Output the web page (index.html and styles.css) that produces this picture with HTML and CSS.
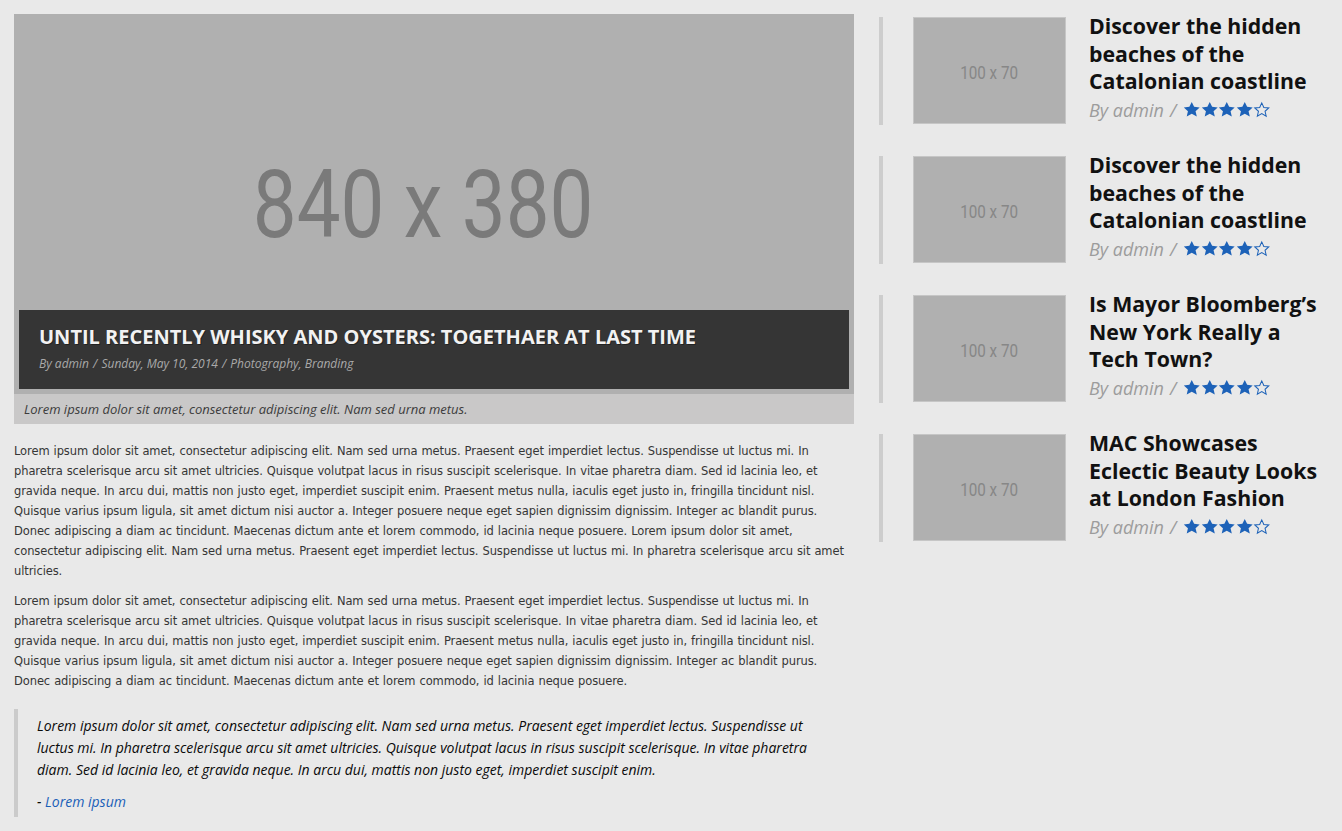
FILE: index.html
```html
<!DOCTYPE html>
<html lang="en">
<head>
<meta charset="utf-8">
<title>Post</title>
<link rel="stylesheet" href="styles.css">
</head>
<body>
<div class="page">
  <main class="main">
    <figure class="hero">
      <div class="hero-img">
        <span class="ph-text">840 x 380</span>
        <div class="hero-title">
          <h1>UNTIL RECENTLY WHISKY AND OYSTERS: TOGETHAER AT LAST TIME</h1>
          <div class="hero-meta">By admin <span class="sep">/</span> Sunday, May 10, 2014 <span class="sep">/</span> Photography, Branding</div>
        </div>
      </div>
      <figcaption class="caption">Lorem ipsum dolor sit amet, consectetur adipiscing elit. Nam sed urna metus.</figcaption>
    </figure>
    <p class="body-text">Lorem ipsum dolor sit amet, consectetur adipiscing elit. Nam sed urna metus. Praesent eget imperdiet lectus. Suspendisse ut luctus mi. In pharetra scelerisque arcu sit amet ultricies. Quisque volutpat lacus in risus suscipit scelerisque. In vitae pharetra diam. Sed id lacinia leo, et gravida neque. In arcu dui, mattis non justo eget, imperdiet suscipit enim. Praesent metus nulla, iaculis eget justo in, fringilla tincidunt nisl. Quisque varius ipsum ligula, sit amet dictum nisi auctor a. Integer posuere neque eget sapien dignissim dignissim. Integer ac blandit purus. Donec adipiscing a diam ac tincidunt. Maecenas dictum ante et lorem commodo, id lacinia neque posuere. Lorem ipsum dolor sit amet, consectetur adipiscing elit. Nam sed urna metus. Praesent eget imperdiet lectus. Suspendisse ut luctus mi. In pharetra scelerisque arcu sit amet ultricies.</p>
    <p class="body-text">Lorem ipsum dolor sit amet, consectetur adipiscing elit. Nam sed urna metus. Praesent eget imperdiet lectus. Suspendisse ut luctus mi. In pharetra scelerisque arcu sit amet ultricies. Quisque volutpat lacus in risus suscipit scelerisque. In vitae pharetra diam. Sed id lacinia leo, et gravida neque. In arcu dui, mattis non justo eget, imperdiet suscipit enim. Praesent metus nulla, iaculis eget justo in, fringilla tincidunt nisl. Quisque varius ipsum ligula, sit amet dictum nisi auctor a. Integer posuere neque eget sapien dignissim dignissim. Integer ac blandit purus. Donec adipiscing a diam ac tincidunt. Maecenas dictum ante et lorem commodo, id lacinia neque posuere.</p>
    <blockquote class="quote">
      <p>Lorem ipsum dolor sit amet, consectetur adipiscing elit. Nam sed urna metus. Praesent eget imperdiet lectus. Suspendisse ut luctus mi. In pharetra scelerisque arcu sit amet ultricies. Quisque volutpat lacus in risus suscipit scelerisque. In vitae pharetra diam. Sed id lacinia leo, et gravida neque. In arcu dui, mattis non justo eget, imperdiet suscipit enim.</p>
      <cite>- <a href="#">Lorem ipsum</a></cite>
    </blockquote>
  </main>

  <aside class="sidebar">
    <article class="item">
      <div class="thumb"><span>100 x 70</span></div>
      <div class="info">
        <h2>Discover the hidden beaches of the Catalonian coastline</h2>
        <div class="meta">By admin <span class="sep">/</span> <span class="stars"><svg viewBox="0 0 17 16"><path class="f" d="M8.5 0.6l2.3 4.8 5.4 0.6-4 3.6 1.2 5.3-4.9-2.8-4.9 2.8 1.2-5.3-4-3.6 5.4-0.6z"/></svg><svg viewBox="0 0 17 16"><path class="f" d="M8.5 0.6l2.3 4.8 5.4 0.6-4 3.6 1.2 5.3-4.9-2.8-4.9 2.8 1.2-5.3-4-3.6 5.4-0.6z"/></svg><svg viewBox="0 0 17 16"><path class="f" d="M8.5 0.6l2.3 4.8 5.4 0.6-4 3.6 1.2 5.3-4.9-2.8-4.9 2.8 1.2-5.3-4-3.6 5.4-0.6z"/></svg><svg viewBox="0 0 17 16"><path class="f" d="M8.5 0.6l2.3 4.8 5.4 0.6-4 3.6 1.2 5.3-4.9-2.8-4.9 2.8 1.2-5.3-4-3.6 5.4-0.6z"/></svg><svg viewBox="0 0 17 16"><path class="o" d="M8.5 1.6l2 4.4 4.8 0.5-3.6 3.2 1.1 4.7-4.3-2.5-4.3 2.5 1.1-4.7-3.6-3.2 4.8-0.5z"/></svg></span></div>
      </div>
    </article>
    <article class="item">
      <div class="thumb"><span>100 x 70</span></div>
      <div class="info">
        <h2>Discover the hidden beaches of the Catalonian coastline</h2>
        <div class="meta">By admin <span class="sep">/</span> <span class="stars"><svg viewBox="0 0 17 16"><path class="f" d="M8.5 0.6l2.3 4.8 5.4 0.6-4 3.6 1.2 5.3-4.9-2.8-4.9 2.8 1.2-5.3-4-3.6 5.4-0.6z"/></svg><svg viewBox="0 0 17 16"><path class="f" d="M8.5 0.6l2.3 4.8 5.4 0.6-4 3.6 1.2 5.3-4.9-2.8-4.9 2.8 1.2-5.3-4-3.6 5.4-0.6z"/></svg><svg viewBox="0 0 17 16"><path class="f" d="M8.5 0.6l2.3 4.8 5.4 0.6-4 3.6 1.2 5.3-4.9-2.8-4.9 2.8 1.2-5.3-4-3.6 5.4-0.6z"/></svg><svg viewBox="0 0 17 16"><path class="f" d="M8.5 0.6l2.3 4.8 5.4 0.6-4 3.6 1.2 5.3-4.9-2.8-4.9 2.8 1.2-5.3-4-3.6 5.4-0.6z"/></svg><svg viewBox="0 0 17 16"><path class="o" d="M8.5 1.6l2 4.4 4.8 0.5-3.6 3.2 1.1 4.7-4.3-2.5-4.3 2.5 1.1-4.7-3.6-3.2 4.8-0.5z"/></svg></span></div>
      </div>
    </article>
    <article class="item">
      <div class="thumb"><span>100 x 70</span></div>
      <div class="info">
        <h2>Is Mayor Bloomberg’s New York Really a Tech Town?</h2>
        <div class="meta">By admin <span class="sep">/</span> <span class="stars"><svg viewBox="0 0 17 16"><path class="f" d="M8.5 0.6l2.3 4.8 5.4 0.6-4 3.6 1.2 5.3-4.9-2.8-4.9 2.8 1.2-5.3-4-3.6 5.4-0.6z"/></svg><svg viewBox="0 0 17 16"><path class="f" d="M8.5 0.6l2.3 4.8 5.4 0.6-4 3.6 1.2 5.3-4.9-2.8-4.9 2.8 1.2-5.3-4-3.6 5.4-0.6z"/></svg><svg viewBox="0 0 17 16"><path class="f" d="M8.5 0.6l2.3 4.8 5.4 0.6-4 3.6 1.2 5.3-4.9-2.8-4.9 2.8 1.2-5.3-4-3.6 5.4-0.6z"/></svg><svg viewBox="0 0 17 16"><path class="f" d="M8.5 0.6l2.3 4.8 5.4 0.6-4 3.6 1.2 5.3-4.9-2.8-4.9 2.8 1.2-5.3-4-3.6 5.4-0.6z"/></svg><svg viewBox="0 0 17 16"><path class="o" d="M8.5 1.6l2 4.4 4.8 0.5-3.6 3.2 1.1 4.7-4.3-2.5-4.3 2.5 1.1-4.7-3.6-3.2 4.8-0.5z"/></svg></span></div>
      </div>
    </article>
    <article class="item">
      <div class="thumb"><span>100 x 70</span></div>
      <div class="info">
        <h2>MAC Showcases Eclectic Beauty Looks at London Fashion</h2>
        <div class="meta">By admin <span class="sep">/</span> <span class="stars"><svg viewBox="0 0 17 16"><path class="f" d="M8.5 0.6l2.3 4.8 5.4 0.6-4 3.6 1.2 5.3-4.9-2.8-4.9 2.8 1.2-5.3-4-3.6 5.4-0.6z"/></svg><svg viewBox="0 0 17 16"><path class="f" d="M8.5 0.6l2.3 4.8 5.4 0.6-4 3.6 1.2 5.3-4.9-2.8-4.9 2.8 1.2-5.3-4-3.6 5.4-0.6z"/></svg><svg viewBox="0 0 17 16"><path class="f" d="M8.5 0.6l2.3 4.8 5.4 0.6-4 3.6 1.2 5.3-4.9-2.8-4.9 2.8 1.2-5.3-4-3.6 5.4-0.6z"/></svg><svg viewBox="0 0 17 16"><path class="f" d="M8.5 0.6l2.3 4.8 5.4 0.6-4 3.6 1.2 5.3-4.9-2.8-4.9 2.8 1.2-5.3-4-3.6 5.4-0.6z"/></svg><svg viewBox="0 0 17 16"><path class="o" d="M8.5 1.6l2 4.4 4.8 0.5-3.6 3.2 1.1 4.7-4.3-2.5-4.3 2.5 1.1-4.7-3.6-3.2 4.8-0.5z"/></svg></span></div>
      </div>
    </article>
  </aside>
</div>
</body>
</html>
```

FILE: styles.css
```css
html, body {
  margin: 0;
  padding: 0;
  background: #e9e9e9;
}

.page {
  display: flex;
  gap: 25px;
  padding: 14px;
  align-items: flex-start;
}

.main {
  width: 840px;
  flex: 0 0 840px;
}

.hero {
  margin: 0;
}

.hero-img {
  position: relative;
  height: 380px;
  background: #b0b0b0;
  display: flex;
  align-items: center;
  justify-content: center;
}

.ph-text {
  font-family: Roboto, "Liberation Sans", sans-serif;
  font-size: 94px;
  color: #7a7a7a;
  transform: scaleX(0.83);
  margin-left: -22px;
  line-height: 1;
  margin-top: 2px;
}

.hero-title {
  position: absolute;
  left: 5px;
  right: 5px;
  bottom: 5px;
  height: 79px;
  box-sizing: border-box;
  background: #353535;
  padding: 13px 20px 0;
}

.hero-title h1 {
  margin: 0;
  font-family: "Open Sans", sans-serif;
  font-weight: 700;
  font-size: 20px;
  line-height: 28px;
  color: #f2f2f2;
  text-shadow: 1px 1px 0 rgba(0, 0, 0, 0.35);
}

.hero-meta {
  margin-top: 5px;
  font-family: "Open Sans", sans-serif;
  font-style: italic;
  font-size: 12px;
  line-height: 16px;
  color: #a9a9a9;
}

.hero-meta .sep {
  margin: 0 1px;
}

.caption {
  background: #c9c8c8;
  height: 30px;
  line-height: 30px;
  padding: 0 10px;
  font-family: "Open Sans", sans-serif;
  font-style: italic;
  font-size: 13px;
  color: #3c3c3c;
}

.body-text {
  margin: 17px 0 10px;
  font-family: "DejaVu Sans", Tahoma, sans-serif;
  font-size: 11.5px;
  letter-spacing: -0.1px;
  word-spacing: 0.5px;
  line-height: 20px;
  color: #363636;
}

.body-text + .body-text {
  margin-top: 10px;
}

.quote {
  margin: 18px 0 0;
  border-left: 4px solid #cbcbcb;
  padding: 6px 30px 4px 19px;
}

.quote p {
  margin: 0;
  font-family: "Open Sans", sans-serif;
  font-style: italic;
  font-size: 14px;
  line-height: 22px;
  color: #0a0a0a;
}

.quote cite {
  display: block;
  margin-top: 10px;
  font-family: "Open Sans", sans-serif;
  font-style: italic;
  font-size: 14px;
  line-height: 22px;
  color: #0a0a0a;
}

.quote cite a {
  color: #1a5fb8;
  text-decoration: none;
}

.sidebar {
  flex: 1;
  display: flex;
  flex-direction: column;
  gap: 31px;
  padding-top: 3px;
}

.item {
  display: flex;
  height: 108px;
  border-left: 4px solid #cdcdcd;
  box-sizing: border-box;
}

.thumb {
  margin-left: 30px;
  width: 153px;
  height: 107px;
  box-sizing: border-box;
  border: 1px solid #c6c6c6;
  background: #b0b0b0;
  display: flex;
  align-items: center;
  justify-content: center;
  flex: 0 0 auto;
}

.thumb span {
  font-family: Roboto, "Liberation Sans", sans-serif;
  font-size: 19px;
  color: #878787;
  transform: scaleX(0.8);
  margin-top: 4px;
}

.info {
  margin-left: 23px;
  margin-top: -5px;
}

.info h2 {
  margin: 0;
  font-family: "Open Sans", sans-serif;
  font-weight: 700;
  font-size: 21.3px;
  line-height: 27.5px;
  color: #111;
}

.meta {
  margin-top: 2px;
  font-family: "Open Sans", sans-serif;
  font-style: italic;
  font-size: 18px;
  line-height: 26px;
  color: #9c9c9c;
  display: flex;
  align-items: center;
}

.meta .sep {
  margin: 0 7px 0 6px;
}

.stars {
  display: inline-flex;
}

.stars svg {
  width: 17.5px;
  height: 17px;
  display: block;
}

.stars .f {
  fill: #1d62b8;
}

.stars .o {
  fill: none;
  stroke: #1d62b8;
  stroke-width: 1;
}
```
